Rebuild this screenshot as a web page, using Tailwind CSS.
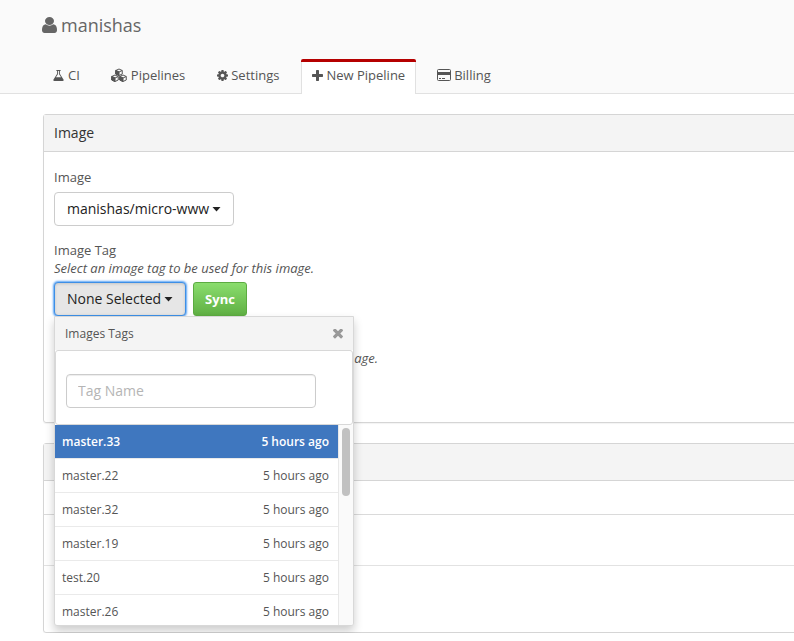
<!DOCTYPE html>
<html lang="en">
<head>
<meta charset="utf-8">
<meta name="viewport" content="width=device-width, initial-scale=1">
<title>manishas</title>
<script src="https://cdn.jsdelivr.net/npm/@tailwindcss/browser@4"></script>
</head>
<body class="overflow-x-hidden bg-white font-['Open_Sans','Noto_Sans',sans-serif] text-[13px] leading-5 text-[#555]">
<header class="border-b border-[#e1e1e1] bg-[#fafafa] pl-[42px]">
  <h1 class="flex h-[59px] items-start gap-1 pt-[13px] text-[18px] leading-6 text-[#666]">
    <svg class="mt-1 h-4 w-[15px]" viewBox="256 128 1280 1536" preserveAspectRatio="none" fill="currentColor" aria-hidden="true"><path d="M1536 1399q0 109-62.5 187t-150.5 78h-854q-88 0-150.5-78t-62.5-187q0-85 8.5-160.5t31.5-152 58.5-131 94-89 134.5-34.5q131 128 313 128t313-128q76 0 134.5 34.5t94 89 58.5 131 31.5 152 8.5 160.5zm-256-887q0 159-112.5 271.5t-271.5 112.5-271.5-112.5-112.5-271.5 112.5-271.5 271.5-112.5 271.5 112.5 112.5 271.5z"/></svg>
    manishas
  </h1>
  <nav class="-mb-px flex gap-[10px] text-[#555]">
    <a href="#" class="flex h-[35px] items-center gap-1 border-x border-t-3 border-transparent px-[10px] pb-[6px]">
      <svg class="h-[11px] w-[11px]" viewBox="128 128 1536 1536" fill="currentColor" aria-hidden="true"><path d="M1591 1448q56 89 21.500 152.500t-140.500 63.500h-1152q-106 0-140.500-63.500t21.500-152.500l503-793v-399h-64q-26 0-45-19t-19-45 19-45 45-19h512q26 0 45 19t19 45-19 45-45 19h-64v399zm-779-725l-272 429h712l-272-429-20-31v-436h-128v436z"/></svg>CI</a>
    <a href="#" class="flex h-[35px] items-center gap-1 border-x border-t-3 border-transparent px-[9px] pb-[6px]">
      <svg class="h-[14px] w-4" viewBox="0 0 32 28" fill="none" stroke="currentColor" stroke-width="2" stroke-linejoin="round" aria-hidden="true">
        <path d="M16 2l6.500 3v7L16 15l-6.500-3V5zM9.500 5l6.500 3 6.500-3M8 14l6.500 3v7L8 27l-6.500-3v-7zM1.500 17L8 20l6.500-3M24 14l6.500 3v7L24 27l-6.500-3v-7zM17.500 17l6.500 3 6.500-3"/>
        <path fill="currentColor" d="M9.500 5l6.500 3v7l-6.500-3zM1.500 17L8 20v7l-6.500-3zM17.500 17l6.500 3v7l-6.500-3z"/></svg>Pipelines</a>
    <a href="#" class="flex h-[35px] items-center gap-[3px] border-x border-t-3 border-transparent px-[11px] pb-[6px]">
      <svg class="h-[11px] w-[11px]" viewBox="128 128 1536 1536" fill="currentColor" aria-hidden="true"><path d="M1152 896q0-106-75-181t-181-75-181 75-75 181 75 181 181 75 181-75 75-181zm512-109v222q0 12-8 23t-20 13l-185 28q-19 54-39 91 35 50 107 138 10 12 10 25t-9 23q-27 37-99 108t-94 71q-12 0-26-9l-138-108q-44 23-91 38-16 136-29 186-7 28-36 28h-222q-14 0-24.500-8.500t-11.500-21.500l-28-184q-49-16-90-37l-141 107q-10 9-25 9-14 0-25-11-126-114-165-168-7-10-7-23 0-12 8-23 15-21 51-66.500t54-70.500q-27-50-41-99l-183-27q-13-2-21-12.500t-8-23.500v-222q0-12 8-23t19-13l186-28q14-46 39-92-40-57-107-138-10-12-10-24 0-10 9-23 26-36 98.500-107.500t94.500-71.500q13 0 26 10l138 107q44-23 91-38 16-136 29-186 7-28 36-28h222q14 0 24.500 8.500t11.500 21.500l28 184q49 16 90 37l142-107q9-9 24-9 13 0 25 10 129 119 165 170 7 8 7 22 0 12-8 23-15 21-51 66.500t-54 70.500q26 50 41 98l183 28q13 2 21 12.500t8 23.500z"/></svg>Settings</a>
    <a href="#" aria-current="page" class="flex h-[35px] flex-col rounded-t-[2px] bg-[#b50000]">
      <span class="mt-[3px] flex grow items-center gap-[3px] border-x border-[#e1e1e1] bg-white px-[10px] pb-[6px]">
      <svg class="h-[11px] w-[11px]" viewBox="192 128 1408 1408" fill="currentColor" aria-hidden="true"><path d="M1600 736v192q0 40-28 68t-68 28h-416v416q0 40-28 68t-68 28h-192q-40 0-68-28t-28-68v-416h-416q-40 0-68-28t-28-68v-192q0-40 28-68t68-28h416v-416q0-40 28-68t68-28h192q40 0 68 28t28 68v416h416q40 0 68 28t28 68z"/></svg>New Pipeline</span></a>
    <a href="#" class="flex h-[35px] items-center gap-[3px] border-x border-t-3 border-transparent px-[10px] pb-[6px]">
      <svg class="h-3 w-[14px]" viewBox="0 0 14 12" fill="currentColor" aria-hidden="true"><rect x=".5" y=".5" width="13" height="11" rx="1" fill="none" stroke="currentColor"/><path d="M0 3h14v3H0zM2 9h2v1H2zM5 9h3v1H5z"/></svg>Billing</a>
  </nav>
</header>

<main class="-mr-2 ml-[43px] mt-5 flex flex-col gap-5">
  <section class="rounded-[3px] border border-[#d5d5d5] shadow-[0_1px_1px_rgba(0,0,0,0.05)]">
    <h2 class="border-b border-[#d5d5d5] bg-[#f4f4f4] px-[10px] py-2 text-[14px] text-[#333]">Image</h2>
    <form class="flex flex-col items-start px-[10px] pt-[15px] pb-[18px]">
      <label for="image" class="mb-[5px] text-[#555]">Image</label>
      <button id="image" type="button" class="flex h-[34px] items-center gap-[3px] rounded-[4px] border border-[#ccc] bg-white px-3 text-[14px] text-[#222]">manishas/micro-www
        <svg class="h-[5px] w-[9px]" viewBox="0 0 8 5" fill="currentColor" aria-hidden="true"><path d="M0 0h8L4 4.500z"/></svg></button>
      <label for="tag" class="mt-[15px] leading-[18px] text-[#555]">Image Tag</label>
      <p class="mb-[5px] text-[13px] leading-[18px] italic">Select an image tag to be used for this image.</p>
      <div class="relative flex gap-[7px]">
        <button id="tag" type="button" aria-expanded="true" class="flex h-[34px] items-center gap-[3px] rounded-[4px] border border-[#3d8fe6] bg-[#e6e6e6] px-3 text-[14px] text-[#222] shadow-[0_0_2px_1px_#5ba4f5,inset_0_1px_3px_rgba(0,0,0,0.15)]">None Selected
          <svg class="h-[5px] w-[9px]" viewBox="0 0 8 5" fill="currentColor" aria-hidden="true"><path d="M0 0h8L4 4.500z"/></svg></button>
        <button type="button" class="h-[34px] rounded-[3px] border border-[#5cab41] bg-linear-to-b from-[#8add6d] to-[#60b044] px-[11px] text-[13px] font-bold text-white">Sync</button>

        <div class="absolute top-[34px] left-0 z-10 w-[300px] overflow-hidden rounded-b-[3px] border border-[#d8d8d8] bg-white text-[12px] shadow-[0_5px_10px_rgba(0,0,0,0.2)]">
          <div class="flex h-[33px] items-center justify-between bg-[#f4f4f4] px-[10px]">
            <span>Images Tags</span>
            <button type="button" aria-label="Close" class="text-[#999]"><svg class="h-[10px] w-[10px]" viewBox="302 434 1188 1188" fill="currentColor" aria-hidden="true"><path d="M1490 1322q0 40-28 68l-136 136q-28 28-68 28t-68-28l-294-294-294 294q-28 28-68 28t-68-28l-136-136q-28-28-28-68t28-68l294-294-294-294q-28-28-28-68t28-68l136-136q28-28 68-28t68 28l294 294 294-294q28-28 68-28t68 28l136 136q28 28 28 68t-28 68l-294 294 294 294q28 28 28 68z"/></svg></button>
          </div>
          <div class="rounded-[3px] border border-[#d8d8d8] px-[10px] pt-[23px] pb-4">
            <input type="text" aria-label="Tag Name" placeholder="Tag Name" class="block h-[34px] w-[250px] rounded-[4px] border border-[#ccc] px-[11px] pb-[2px] text-[14px] shadow-[inset_0_1px_1px_rgba(0,0,0,0.075)] placeholder:text-[#b5b5b5]">
          </div>
          <div class="flex h-[200px] overflow-hidden">
            <ul class="grow">
              <li class="flex h-[34px] items-center justify-between border-b border-[#eaeaea] bg-[#3f77bf] bg-clip-padding pr-[9px] pl-[7px] font-semibold text-white"><span>master.33</span><span>5 hours ago</span></li>
              <li class="flex h-[34px] items-center justify-between border-b border-[#eaeaea] pr-[9px] pl-[7px]"><span>master.22</span><span>5 hours ago</span></li>
              <li class="flex h-[34px] items-center justify-between border-b border-[#eaeaea] pr-[9px] pl-[7px]"><span>master.32</span><span>5 hours ago</span></li>
              <li class="flex h-[34px] items-center justify-between border-b border-[#eaeaea] pr-[9px] pl-[7px]"><span>master.19</span><span>5 hours ago</span></li>
              <li class="flex h-[34px] items-center justify-between border-b border-[#eaeaea] pr-[9px] pl-[7px]"><span>test.20</span><span>5 hours ago</span></li>
              <li class="flex h-[34px] items-center justify-between border-b border-[#eaeaea] pr-[9px] pl-[7px]"><span>master.26</span><span>5 hours ago</span></li>
            </ul>
            <div class="w-[15px] border-l border-[#e8e8e8] bg-[#fafafa] pt-[3px] pl-[3px]"><div class="h-[68px] w-2 rounded-full bg-[#c1c1c1]"></div></div>
          </div>
        </div>
      </div>
      <p class="mt-[33px] mb-[5px] w-[324px] text-right text-[13px] leading-[18px] italic">age.</p>
      <div class="h-8 w-[120px] rounded-[4px] border border-[#ccc]"></div>
    </form>
  </section>

  <section class="rounded-[3px] border border-[#d5d5d5] shadow-[0_1px_1px_rgba(0,0,0,0.05)]">
    <div class="h-[37px] border-b border-[#d5d5d5] bg-[#f4f4f4]"></div>
    <div class="h-[34px] border-b border-[#dadada]"></div>
    <div class="h-[51px] border-b border-[#e2e2e2]"></div>
    <div class="px-[10px] pt-[10px] pb-6"><div class="h-8 w-[120px] rounded-[4px] border border-[#ccc]"></div></div>
  </section>
</main>
</body>
</html>
